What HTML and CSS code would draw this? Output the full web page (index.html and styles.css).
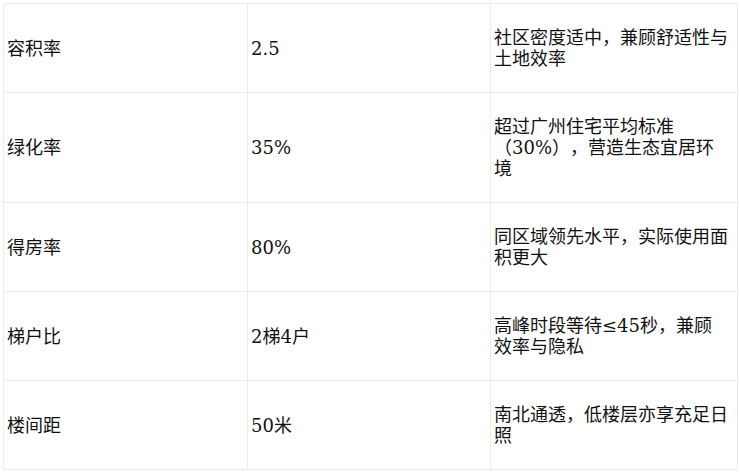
FILE: index.html
```html
<!DOCTYPE html>
<html lang="zh-CN">
<head>
<meta charset="utf-8">
<link rel="stylesheet" href="styles.css">
</head>
<body>
<div class="wrap">
<table class="spec">
<colgroup><col class="c1"><col class="c2"><col class="c3"></colgroup>
<tbody>
<tr><td>容积率</td><td>2.5</td><td class="note">社区密度适中，兼顾舒适性与土地效率</td></tr>
<tr><td>绿化率</td><td>35%</td><td class="note">超过广州住宅平均标准（30%），营造生态宜居环境</td></tr>
<tr><td>得房率</td><td>80%</td><td class="note">同区域领先水平，实际使用面积更大</td></tr>
<tr><td>梯户比</td><td>2梯4户</td><td class="note">高峰时段等待≤45秒，兼顾效率与隐私</td></tr>
<tr><td>楼间距</td><td>50米</td><td class="note">南北通透，低楼层亦享充足日照</td></tr>
</tbody>
</table>
</div>
</body>
</html>
```
FILE: styles.css
```css
html, body {
  margin: 0;
  padding: 0;
  background: #fff;
}
.wrap {
  padding: 3px 0 0 3px;
}
.spec {
  border-collapse: collapse;
  table-layout: fixed;
  width: 734px;
  font-family: "DejaVu Serif", "Noto Sans CJK SC", serif;
  font-size: 18px;
  line-height: 21px;
  color: #111;
  text-spacing-trim: space-all;
}
.c1 { width: 244px; }
.c2 { width: 243px; }
.c3 { width: 247px; }
.spec td {
  border: 1px solid #ececec;
  padding: 23px 4px 23px 3px;
  vertical-align: middle;
  text-align: left;
}
.spec td.note {
  padding-right: 8px;
}
```
